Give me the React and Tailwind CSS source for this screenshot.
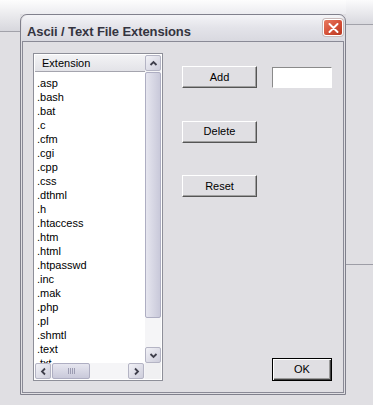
import React from "react";

const extensions = [
  ".asp", ".bash", ".bat", ".c", ".cfm", ".cgi", ".cpp", ".css", ".dthml", ".h",
  ".htaccess", ".htm", ".html", ".htpasswd", ".inc", ".mak", ".php", ".pl", ".shmtl", ".text", ".txt",
];

function Chevron({ dir }) {
  const paths = {
    up: "M1.5 6 L4.5 3 L7.5 6",
    down: "M1.5 3 L4.5 6 L7.5 3",
    left: "M6 1.5 L3 4.5 L6 7.5",
    right: "M3 1.5 L6 4.5 L3 7.5",
  };
  return (
    <svg width="9" height="9" viewBox="0 0 9 9">
      <path d={paths[dir]} fill="none" stroke="#3f3f4c" strokeWidth="1.8" />
    </svg>
  );
}

function ScrollButton({ dir }) {
  return (
    <div className="w-[16px] h-[16px] shrink-0 flex items-center justify-center rounded-[2px] border border-[#b4b4c4] bg-gradient-to-br from-[#f2f2f7] to-[#cdcddb]">
      <Chevron dir={dir} />
    </div>
  );
}

function Button({ children, isDefault }) {
  return (
    <button
      type="button"
      className={
        "w-[75px] h-[22px] bg-[#e0dfe3] text-[11px] text-black leading-none " +
        (isDefault
          ? "border border-black shadow-[inset_1px_1px_0_#ffffff,inset_-1px_-1px_0_#404040,inset_-2px_-2px_0_#9a9a9a]"
          : "border border-t-white border-l-white border-b-[#555] border-r-[#555] shadow-[inset_-1px_-1px_0_#a0a0a0]")
      }
    >
      {children}
    </button>
  );
}

export default function App() {
  return (
    <div className="relative w-[373px] h-[405px] overflow-hidden bg-[#e0dfe3] font-['Liberation_Sans',Arial,sans-serif]">
      {/* desktop behind the dialog */}
      <div className="flex h-full">
        <div className="w-[20px]">
          <div className="h-[32px] bg-gradient-to-b from-[#fdfdfd] to-[#d7d7dd] border-b border-[#a2a2aa]" />
        </div>
        <div className="flex-1">
          <div className="h-[14px] bg-gradient-to-b from-[#fdfdfd] to-[#ececf0]" />
        </div>
        <div className="w-[27px]">
          <div className="h-[25px] bg-gradient-to-b from-[#fbfbfc] to-[#d9d9df] border-b border-[#a2a2aa]" />
          <div className="mt-[239px] border-t border-[#9d9da6]" />
        </div>
      </div>

      {/* dialog window */}
      <div className="absolute left-[20px] top-[14px] w-[326px] h-[381px] flex flex-col rounded-t-[7px] border border-[#80808c] bg-[#e0dfe3] px-px pb-px">
        <div className="h-[26px] shrink-0 flex items-start justify-between pl-[5px] pr-[1px] rounded-t-[6px] bg-gradient-to-b from-[#f4f4f7] via-[#e3e3e9] to-[#d9d9e0]">
          <span className="pt-[9px] text-[13px] font-bold leading-[15px] text-[#34343f] tracking-[-0.1px]">
            Ascii / Text File Extensions
          </span>
          <div className="mt-[4px] w-[20px] h-[17px] flex items-center justify-center rounded-[3px] border border-white bg-gradient-to-br from-[#e87a60] via-[#d6523a] to-[#b8371f] shadow-[0_0_0_1px_#c7b9b9]">
            <svg width="11" height="10" viewBox="0 0 11 10">
              <path d="M1.5 1 L9.5 9 M9.5 1 L1.5 9" stroke="#ffffff" strokeWidth="1.9" strokeLinecap="round" />
            </svg>
          </div>
        </div>

        <div className="flex-1 border border-[#8a8a96] bg-[#e0dfe3] flex pl-[10px] pt-[11px]">
          {/* list view */}
          <div className="w-[130px] h-[328px] border border-[#8e8f99] bg-white p-px flex flex-col">
            <div className="flex flex-1 min-h-0">
              <div className="flex-1 flex flex-col min-w-0 overflow-hidden">
                <div className="h-[17px] shrink-0 border-b border-[#a5a5ae] bg-gradient-to-b from-[#f3f3f5] to-[#e3e3e8] pl-[7px] text-[11px] leading-[16px] text-black">
                  Extension
                </div>
                <div className="pt-[4px] overflow-hidden">
                  {extensions.map((ext) => (
                    <div key={ext} className="h-[14px] pl-[2px] text-[11px] leading-[14px] text-black">
                      {ext}
                    </div>
                  ))}
                </div>
              </div>
              <div className="w-[16px] shrink-0 flex flex-col bg-[#f5f5f7]">
                <ScrollButton dir="up" />
                <div className="mt-px h-[246px] rounded-[2px] border border-[#aeaec2] bg-gradient-to-r from-[#e6e6ef] to-[#c9c9da]" />
                <div className="flex-1" />
                <ScrollButton dir="down" />
              </div>
            </div>
            <div className="h-[16px] shrink-0 flex">
              <div className="flex-1 flex bg-[#f5f5f7] pr-px">
                <ScrollButton dir="left" />
                <div className="ml-px w-[38px] h-[16px] rounded-[2px] border border-[#aeaec2] bg-gradient-to-b from-[#e6e6ef] to-[#c9c9da] flex items-center justify-center gap-px">
                  <span className="w-px h-[6px] bg-[#9c9cb2]" />
                  <span className="w-px h-[6px] bg-[#9c9cb2]" />
                  <span className="w-px h-[6px] bg-[#9c9cb2]" />
                  <span className="w-px h-[6px] bg-[#9c9cb2]" />
                </div>
                <div className="ml-auto">
                  <ScrollButton dir="right" />
                </div>
              </div>
              <div className="w-[16px] bg-[#f0f0f2]" />
            </div>
          </div>

          {/* buttons */}
          <div className="ml-[19px] h-[328px] flex flex-col items-start pt-[13px]">
            <div className="flex items-start">
              <Button>Add</Button>
              <input
                type="text"
                className="ml-[15px] mt-px w-[60px] h-[21px] bg-white border border-t-[#8a8a8a] border-l-[#8a8a8a] border-b-white border-r-white outline-none"
              />
            </div>
            <div className="mt-[30px]">
              <Button>Delete</Button>
            </div>
            <div className="mt-[30px]">
              <Button>Reset</Button>
            </div>
            <div className="mt-auto ml-[90px]">
              <button
                type="button"
                className="w-[60px] h-[23px] bg-[#e0dfe3] text-[11px] text-black leading-none border border-black shadow-[inset_1px_1px_0_#ffffff,inset_-1px_-1px_0_#404040,inset_-2px_-2px_0_#9a9a9a]"
              >
                OK
              </button>
            </div>
          </div>
        </div>
      </div>
    </div>
  );
}
